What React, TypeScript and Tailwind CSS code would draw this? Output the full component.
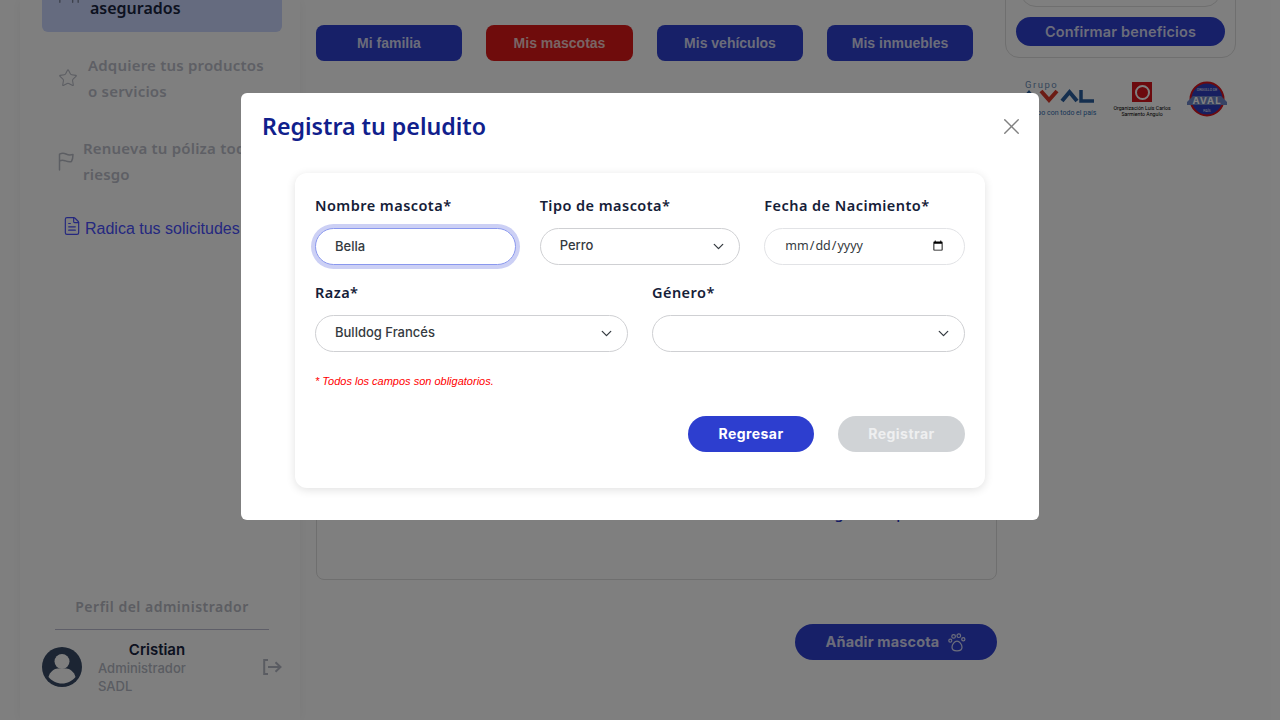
import { Star, FileText, X, ChevronDown, Users } from "lucide-react";

const human = { fontFamily: '"Noto Sans", sans-serif' };
const wide = { fontFamily: 'Inter, sans-serif' };

function FlagIcon() {
  return (
    <svg width="17" height="19" viewBox="0 0 17 19" fill="none" stroke="#b9bcc6" strokeWidth="1.5" strokeLinejoin="round" strokeLinecap="round">
      <path d="M1.5 18V2.2C4 .8 6 1 8 2s4 1.4 7 .4c0 3-.6 5.4-1.6 7.2-3 .6-4.6-.2-6.4-.9-2-.7-3.8-.6-5.5.3" />
    </svg>
  );
}

function LogoutIcon() {
  return (
    <svg width="19" height="16" viewBox="0 0 19 16" fill="none" stroke="#b4b8c4" strokeWidth="2">
      <path d="M5 1H1.2v14H5" />
      <path d="M5 8h12.5M12.5 3.2 17.5 8l-5 4.8" />
    </svg>
  );
}

function PawIcon() {
  return (
    <svg width="18" height="19" viewBox="0 0 18 19" fill="none" stroke="#d9dcf8" strokeWidth="1.2">
      <path d="M9 8.2c2.4 0 5 3 5 6 0 2.6-2.2 3.6-5 3.6s-5-1-5-3.6c0-3 2.600-6 5-6Z" />
      <circle cx="2.300" cy="7.700" r="1.500" />
      <circle cx="5.600" cy="3.400" r="1.800" />
      <circle cx="10.800" cy="2.700" r="1.800" />
      <circle cx="15.300" cy="6.300" r="1.600" />
    </svg>
  );
}

function Avatar() {
  return (
    <svg width="40" height="40" viewBox="0 0 40 40" className="shrink-0">
      <circle cx="20" cy="20" r="20" fill="#384a66" />
      <circle cx="20" cy="14.500" r="7.500" fill="#ffffff" />
      <path d="M6.500 30c1.500-5.500 6-8.500 9-8.500h9c3 0 7.500 3 9 8.500-3.500 4-8 6.500-13.500 6.500S10 34 6.500 30Z" fill="#ffffff" />
    </svg>
  );
}

function LogoAval() {
  return (
    <svg width="78" height="42" viewBox="0 0 78 42">
      <text x="5" y="8" fontSize="9.500" letterSpacing="1.500" fill="#6d8db5" fontFamily="Roboto, sans-serif">Grupo</text>
      <path d="M2 21 9 13 16 21" fill="none" stroke="#2a5f9e" strokeWidth="4" />
      <path d="M21 11 29 20 37 11" fill="none" stroke="#d8392b" strokeWidth="4" />
      <path d="M42 21 49.500 12 57 21" fill="none" stroke="#2a5f9e" strokeWidth="4" />
      <path d="M61 10v11h13" fill="none" stroke="#2a5f9e" strokeWidth="3.500" />
      <text x="0" y="35" fontSize="7" fill="#2e6cb0" fontFamily="Roboto, sans-serif">el grupo con todo el país</text>
    </svg>
  );
}

function LogoOrg() {
  return (
    <div className="flex w-[60px] flex-col items-center" style={{ fontFamily: "Roboto, sans-serif" }}>
      <div className="flex h-5 w-5 items-center justify-center bg-[#d9141c]">
        <div className="h-[15px] w-[15px] rounded-full border-2 border-white" />
      </div>
      <div className="mt-[3px] whitespace-nowrap text-center text-[5.200px] leading-[6px] text-black">
        Organización Luis Carlos
        <br />
        Sarmiento Angulo
      </div>
    </div>
  );
}

function LogoBadge() {
  return (
    <svg width="40" height="36" viewBox="0 0 40 36">
      <circle cx="20" cy="18" r="16.500" fill="#2f3fc0" stroke="#d9141c" strokeWidth="2" />
      <path d="M0 21 6 15h28l6 6v3H0Z" fill="#6f86c9" />
      <text x="20" y="22.500" textAnchor="middle" fontSize="9.500" fontWeight="700" letterSpacing="1" fill="#ffffff" fontFamily="Inter, sans-serif">AVAL</text>
      <text x="20" y="9.500" textAnchor="middle" fontSize="3.500" fill="#ffffff" fontFamily="Roboto, sans-serif">ORGULLO DE</text>
      <text x="20" y="31" textAnchor="middle" fontSize="3.500" fill="#ffffff" fontFamily="Roboto, sans-serif">PAÍS</text>
    </svg>
  );
}

function Label({ children }: { children: React.ReactNode }) {
  return (
    <label className="mb-[13px] block text-[14.500px] leading-[20px] font-semibold tracking-[0.45px] text-[#152038]" style={human}>
      {children}
    </label>
  );
}

function SelectField({ value }: { value: string }) {
  return (
    <div className="relative">
      <select
        defaultValue={value}
        className="block h-[37px] w-full appearance-none rounded-full border border-[#cfd0d3] bg-white pb-[2px] pl-[19px] text-[13px] font-medium text-[#343a40]"
        style={wide}
      >
        <option value={value}>{value}</option>
      </select>
      <ChevronDown className="pointer-events-none absolute top-[10px] right-[13px] h-[17px] w-[17px] text-[#343a40]" strokeWidth={1.800} />
    </div>
  );
}

export default function App() {
  return (
    <div className="relative flex h-[720px] w-[1280px] overflow-hidden bg-white">
      <aside className="ml-[20px] flex h-[720px] w-[280px] shrink-0 flex-col overflow-hidden bg-white pr-[18px] pl-[22px] shadow-[0_0_12px_rgba(0,0,0,0.05)]" style={human}>
        <div className="flex h-[32px] shrink-0 items-start gap-[10px] rounded-b-[6px] bg-[#cad6ff] pl-[16px] text-[16px] leading-[16px] font-semibold text-[#182440]">
          <Users className="-mt-[17px] h-[22px] w-[22px] text-[#7c8499]" strokeWidth={1.500} />
          <span>asegurados</span>
        </div>
        <div className="mt-[20px] flex items-center gap-[10px] pl-[16px] text-[15px] leading-[26px] font-semibold tracking-[0.2px] whitespace-nowrap text-[#bcbfca]">
          <Star className="h-[20px] w-[20px] text-[#b9bcc6]" strokeWidth={1.300} />
          <span>
            Adquiere tus productos
            <br />o servicios
          </span>
        </div>
        <div className="mt-[31px] flex items-center gap-[8px] pl-[16px] text-[15px] leading-[26px] font-semibold tracking-[0.2px] whitespace-nowrap text-[#bcbfca]">
          <FlagIcon />
          <span>
            Renueva tu póliza todo
            <br />
            riesgo
          </span>
        </div>
        <div className="mt-[30px] flex items-center gap-[3px] pl-[20px] text-[16px] leading-[24px] whitespace-nowrap text-[#4a50ff]" style={{ fontFamily: '"Liberation Sans", sans-serif' }}>
          <FileText className="-mt-[7px] h-[20px] w-[20px] text-[#4a50ff]" strokeWidth={1.400} />
          <span>Radica tus solicitudes</span>
        </div>
        <div className="mt-auto pb-[25px]">
          <div className="mx-[13px] border-b border-[#bcbcd0] pb-[12px] text-center text-[14px] leading-[20px] font-semibold tracking-[0.5px] text-[#b8bac4]">
            Perfil del administrador
          </div>
          <div className="mt-[9px] flex items-center">
            <Avatar />
            <div className="ml-[16px] w-[122px]" style={wide}>
              <div className="-mb-[1px] pt-[1px] pr-[4px] text-center text-[15px] leading-[20px] font-semibold text-[#182440]">Cristian</div>
              <div className="text-[13px] leading-[18px] font-medium text-[#b4b8c4]">Administrador</div>
              <div className="text-[13px] leading-[18px] font-medium text-[#b4b8c4]">SADL</div>
            </div>
            <div className="ml-[43px]">
              <LogoutIcon />
            </div>
          </div>
        </div>
      </aside>

      <main className="flex w-[697px] shrink-0 flex-col pl-[16px]">
        <div className="mt-[25px] flex gap-x-[24px] text-[14px] font-bold" style={{ fontFamily: '"Liberation Sans", sans-serif' }}>
          <button className="h-[36px] w-[146px] rounded-[8px] bg-[#2e40d0] text-[#d6d9f5]">Mi familia</button>
          <button className="h-[36px] w-[147px] rounded-[8px] bg-[#de1818] text-[#f2c9c9]">Mis mascotas</button>
          <button className="h-[36px] w-[146px] rounded-[8px] bg-[#2e40d0] text-[#d6d9f5]">Mis vehículos</button>
          <button className="h-[36px] w-[146px] rounded-[8px] bg-[#2e40d0] text-[#d6d9f5]">Mis inmuebles</button>
        </div>
        <div className="mt-[39px] flex h-[480px] flex-col items-end justify-end rounded-[8px] border border-[#dedede] pr-[42px] pb-[56px]">
          <span className="text-[14.500px] leading-[20px] font-medium text-[#2432c8]" style={human}>
            Registra tu peludito
          </span>
        </div>
        <div className="mt-[44px] flex justify-end">
          <button className="flex h-[36px] w-[202px] items-center justify-center gap-[9px] rounded-full bg-[#2e40d0] text-[14.500px] font-bold tracking-[0.15px] text-[#d6d9f5]" style={wide}>
            Añadir mascota
            <PawIcon />
          </button>
        </div>
      </main>

      <section className="ml-[8px] flex w-[231px] shrink-0 flex-col">
        <div className="-mt-[42px] rounded-[14px] border border-[#dedede] px-[10px] pt-[1px] pb-[11px]">
          <div className="mx-[4px] h-[47px] rounded-[16px] border border-[#dedede]" />
          <button className="mt-[10px] h-[29px] w-full rounded-full bg-[#2e40d0] text-[14.500px] font-semibold tracking-[0.15px] text-[#d6d9f5]" style={wide}>
            Confirmar beneficios
          </button>
        </div>
        <div className="mt-[22px] flex items-start pl-[15px]">
          <LogoAval />
          <div className="mt-[2px] ml-[14px]">
            <LogoOrg />
          </div>
          <div className="mt-[1px] ml-[15px]">
            <LogoBadge />
          </div>
        </div>
      </section>

      <div className="absolute inset-0 z-40 bg-black/50" />

      <div className="absolute top-[93px] left-[241px] z-50 h-[427px] w-[798px] rounded-[6px] bg-white px-[54px]">
        <div className="-mr-[40px] -ml-[33px] flex h-[67px] items-center justify-between">
          <h2 className="-mt-[1px] text-[23.200px] font-semibold text-[#10208c]" style={human}>
            Registra tu peludito
          </h2>
          <X className="h-[27px] w-[27px] text-[#808080]" strokeWidth={1.200} />
        </div>
        <form className="mt-[13px] h-[315px] w-[690px] rounded-[12px] bg-white px-[20px] pt-[22px] shadow-[0_2px_10px_rgba(0,0,0,0.12)]">
          <div className="grid grid-cols-3 gap-x-[24px]">
            <div>
              <Label>Nombre mascota*</Label>
              <input
                defaultValue="Bella"
                className="block h-[37px] w-full rounded-full border border-[#8a98ee] bg-white pb-[1px] pl-[19px] text-[13px] font-medium text-[#343a40] shadow-[0_0_0_4px_#ccd0f5] outline-none"
                style={wide}
              />
            </div>
            <div>
              <Label>Tipo de mascota*</Label>
              <SelectField value="Perro" />
            </div>
            <div>
              <Label>Fecha de Nacimiento*</Label>
              <input
                type="date"
                className="block h-[37px] w-full rounded-full border border-[#e2e3e6] bg-white pr-[18px] pl-[19px] text-[12.500px] text-[#343a40]"
                style={human}
              />
            </div>
          </div>
          <div className="mt-[17px] grid grid-cols-2 gap-x-[24px]">
            <div>
              <Label>Raza*</Label>
              <SelectField value="Bulldog Francés" />
            </div>
            <div>
              <Label>Género*</Label>
              <SelectField value="" />
            </div>
          </div>
          <p className="mt-[22px] text-[11px] leading-[14px] text-[#ff0000] italic" style={{ fontFamily: '"Liberation Sans", sans-serif' }}>
            * Todos los campos son obligatorios.
          </p>
          <div className="mt-[28px] flex justify-end gap-[24px] text-[14px] font-bold tracking-[0.45px]" style={wide}>
            <button type="button" className="h-[36px] w-[126px] rounded-full bg-[#2d3ecf] pb-[2px] text-white">
              Regresar
            </button>
            <button type="button" className="h-[36px] w-[127px] rounded-full bg-[#d0d3d6] pb-[2px] text-[#eeeff0]">
              Registrar
            </button>
          </div>
        </form>
      </div>
    </div>
  );
}
